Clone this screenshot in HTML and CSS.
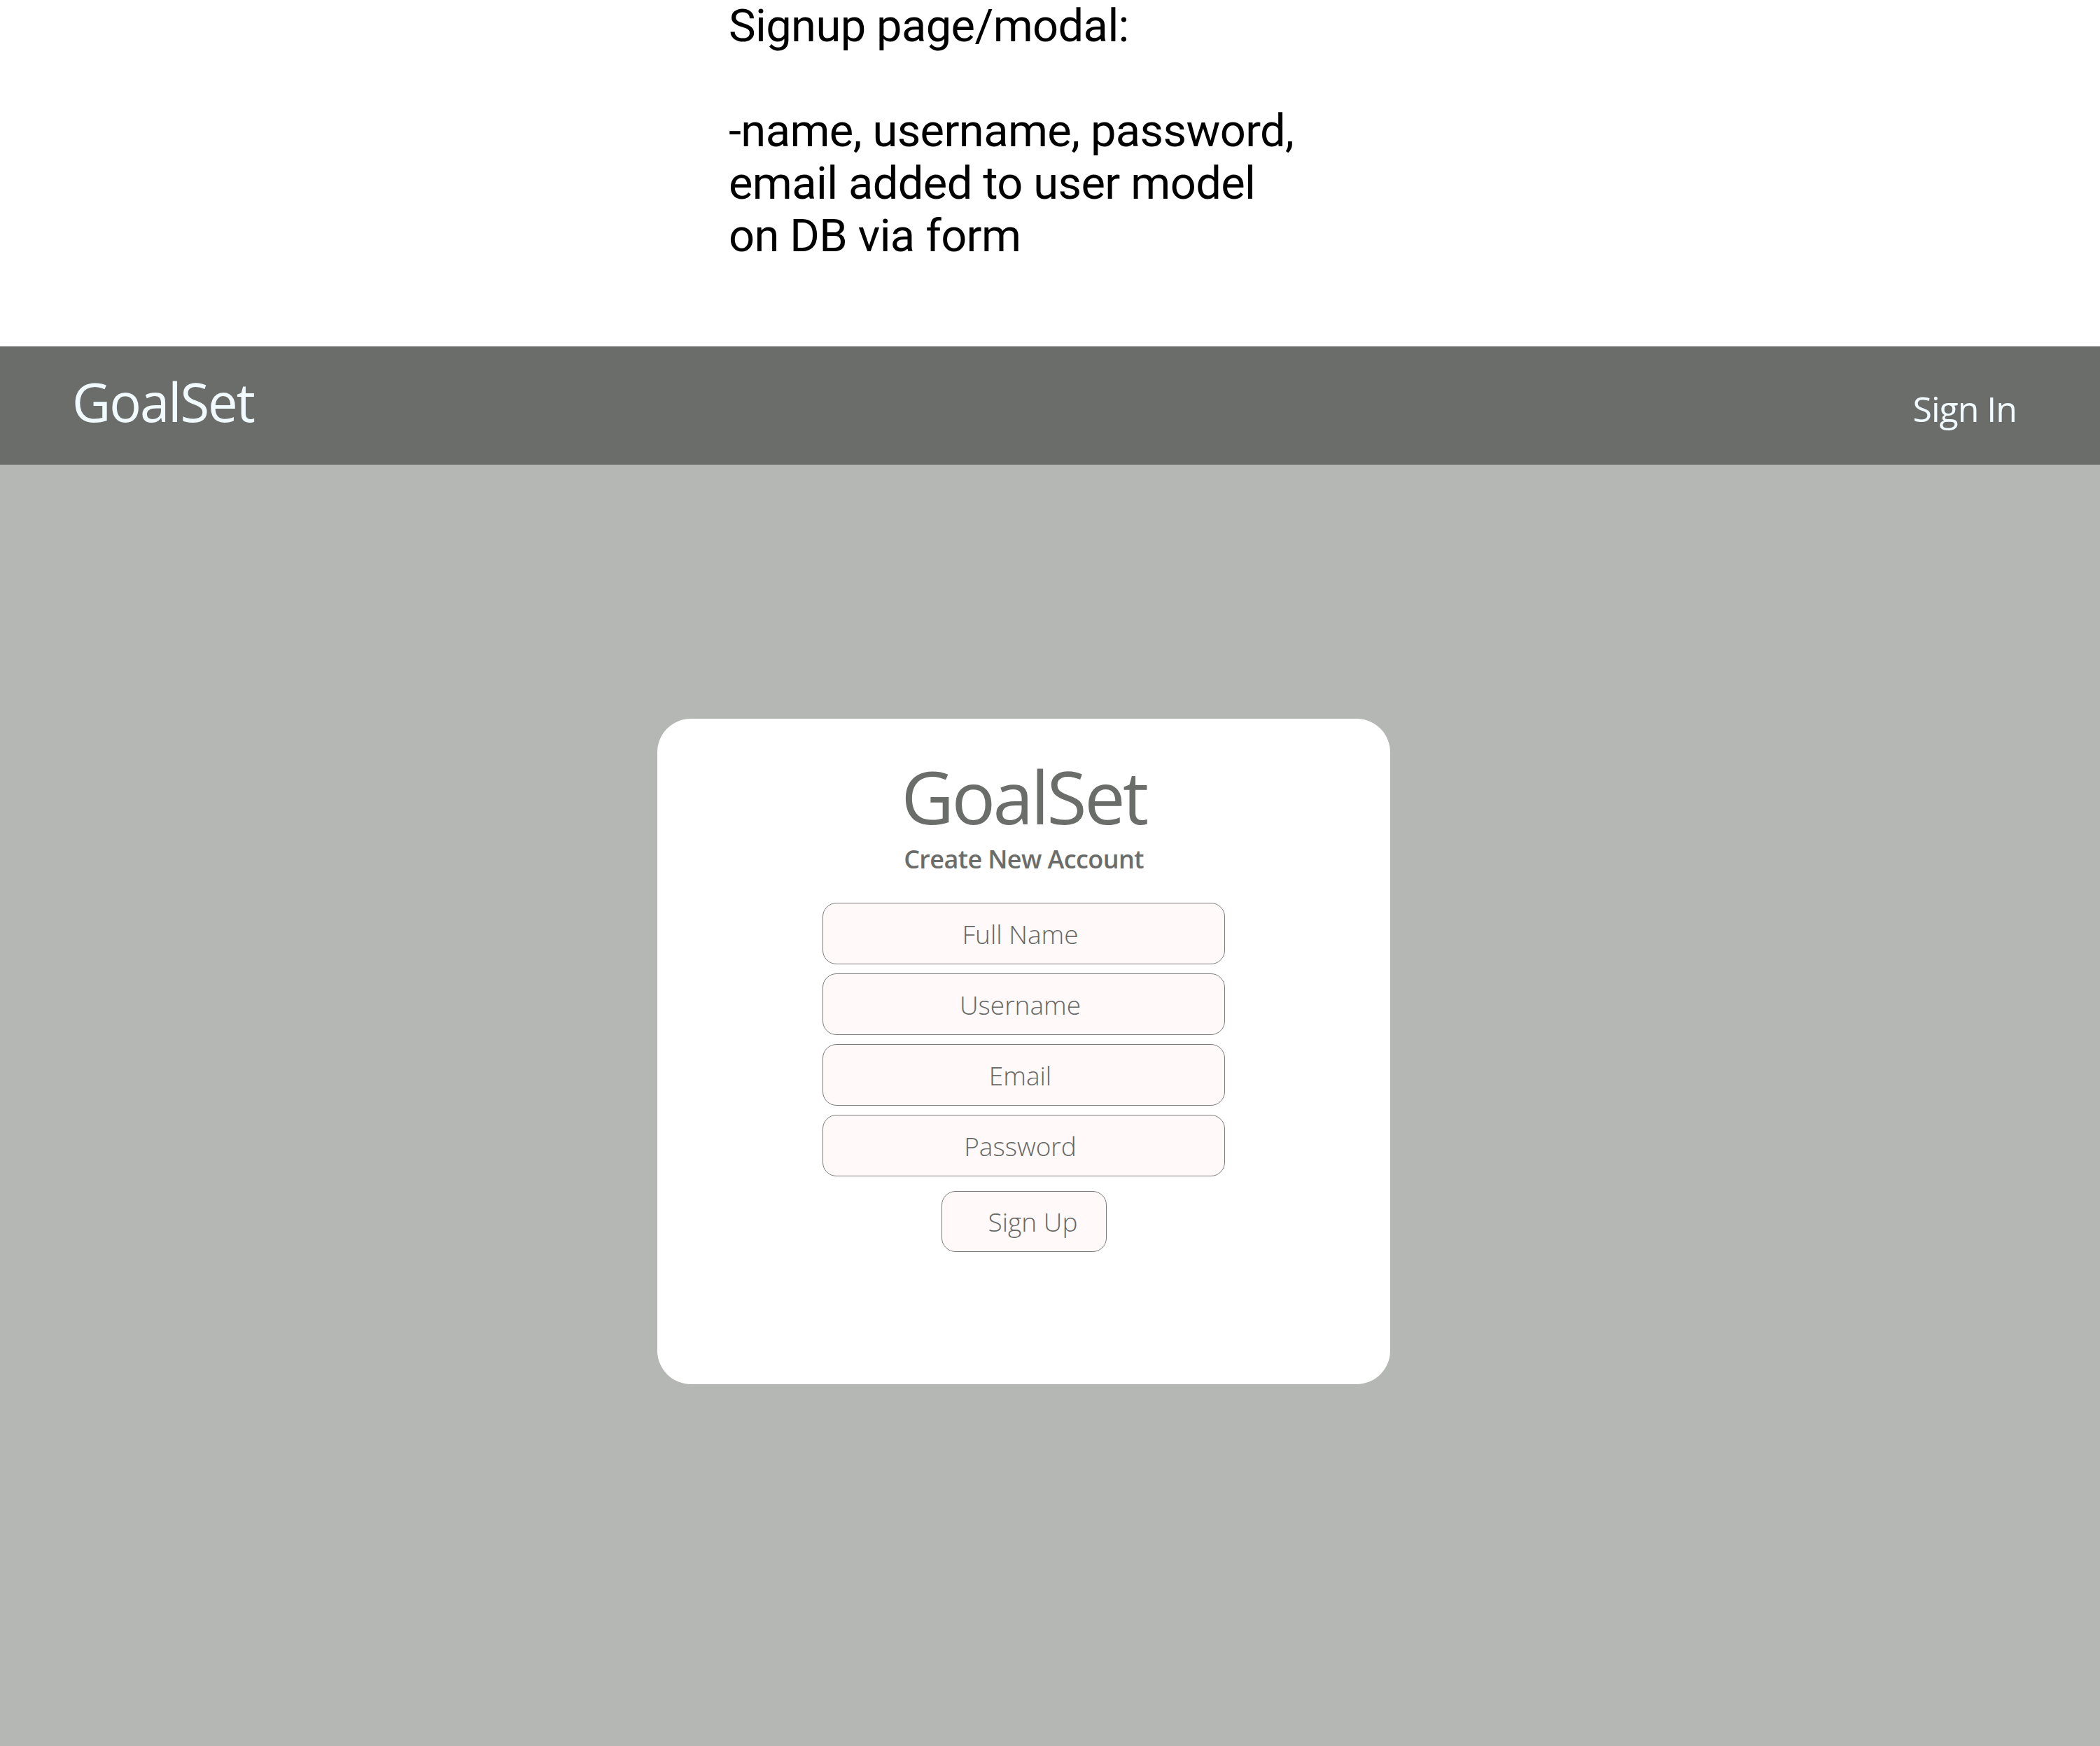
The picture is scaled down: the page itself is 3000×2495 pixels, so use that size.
FILE: index.html
```html
<!DOCTYPE html>
<html lang="en">
<head>
<meta charset="utf-8">
<title>GoalSet - Sign Up</title>
<link rel="stylesheet" href="styles.css">
</head>
<body>
<section class="note">
  <p>Signup page/modal:</p>
  <p class="blank">&nbsp;</p>
  <p>-name, username, password,<br>email added to user model<br>on DB via form</p>
</section>
<header class="topbar">
  <div class="brand">GoalSet</div>
  <a class="signin" href="#">Sign In</a>
</header>
<main class="stage">
  <div class="card">
    <h1 class="card-title">GoalSet</h1>
    <h2 class="card-sub">Create New Account</h2>
    <form class="form">
      <div class="field">Full Name</div>
      <div class="field">Username</div>
      <div class="field">Email</div>
      <div class="field">Password</div>
      <div class="btn-row"><div class="btn">Sign Up</div></div>
    </form>
  </div>
</main>
</body>
</html>
```
FILE: styles.css
```css
* { box-sizing: border-box; }
html, body { margin: 0; padding: 0; }
body {
  width: 3000px;
  min-height: 2495px;
  background: #b5b7b4;
  font-family: "Open Sans", "Noto Sans", sans-serif;
}
.note {
  background: #ffffff;
  height: 495px;
  padding-left: 1041px;
  font-family: Roboto, "Liberation Sans", sans-serif;
  font-size: 65px;
  letter-spacing: -0.6px;
  line-height: 75px;
  color: #000;
}
.note p { margin: 0; }
.topbar {
  height: 169px;
  background: #6b6d6a;
  display: flex;
  justify-content: space-between;
  align-items: baseline;
  padding: 41px 119px 0 103px;
}
.brand {
  font-size: 76px;
  letter-spacing: -2px;
  line-height: 1;
  color: #f0faff;
}
.signin {
  font-size: 50px;
  letter-spacing: -1px;
  line-height: 1;
  color: #f0faff;
  text-decoration: none;
}
.stage {
  padding: 363px 0 0 939px;
}
.card {
  width: 1047px;
  height: 951px;
  background: #ffffff;
  border-radius: 48px;
  padding-top: 59px;
  display: flex;
  flex-direction: column;
  align-items: center;
}
.card-title {
  margin: 0;
  font-size: 104px;
  font-weight: 400;
  letter-spacing: -3.5px;
  line-height: 1;
  color: #6b6d6a;
}
.card-sub {
  margin: 20px 0 0;
  font-size: 36px;
  font-weight: 600;
  letter-spacing: -0.6px;
  line-height: 1;
  color: #6b6d6a;
}
.form {
  margin-top: 44px;
  display: flex;
  flex-direction: column;
  gap: 13px;
  width: 575px;
}
.field {
  height: 88px;
  background: #fff9f9;
  border: 1.5px solid #7a7a7a;
  border-radius: 20px;
  display: flex;
  align-items: center;
  justify-content: center;
  padding-right: 10px;
  font-size: 37px;
  font-weight: 300;
  color: #666866;
}
.btn-row {
  margin-top: 8px;
  display: flex;
  justify-content: center;
}
.btn {
  width: 236px;
  height: 87px;
  background: #fff9f9;
  border: 1.5px solid #7a7a7a;
  border-radius: 20px;
  display: flex;
  align-items: center;
  justify-content: center;
  padding-left: 26px;
  font-size: 37px;
  font-weight: 300;
  color: #666866;
}
```
